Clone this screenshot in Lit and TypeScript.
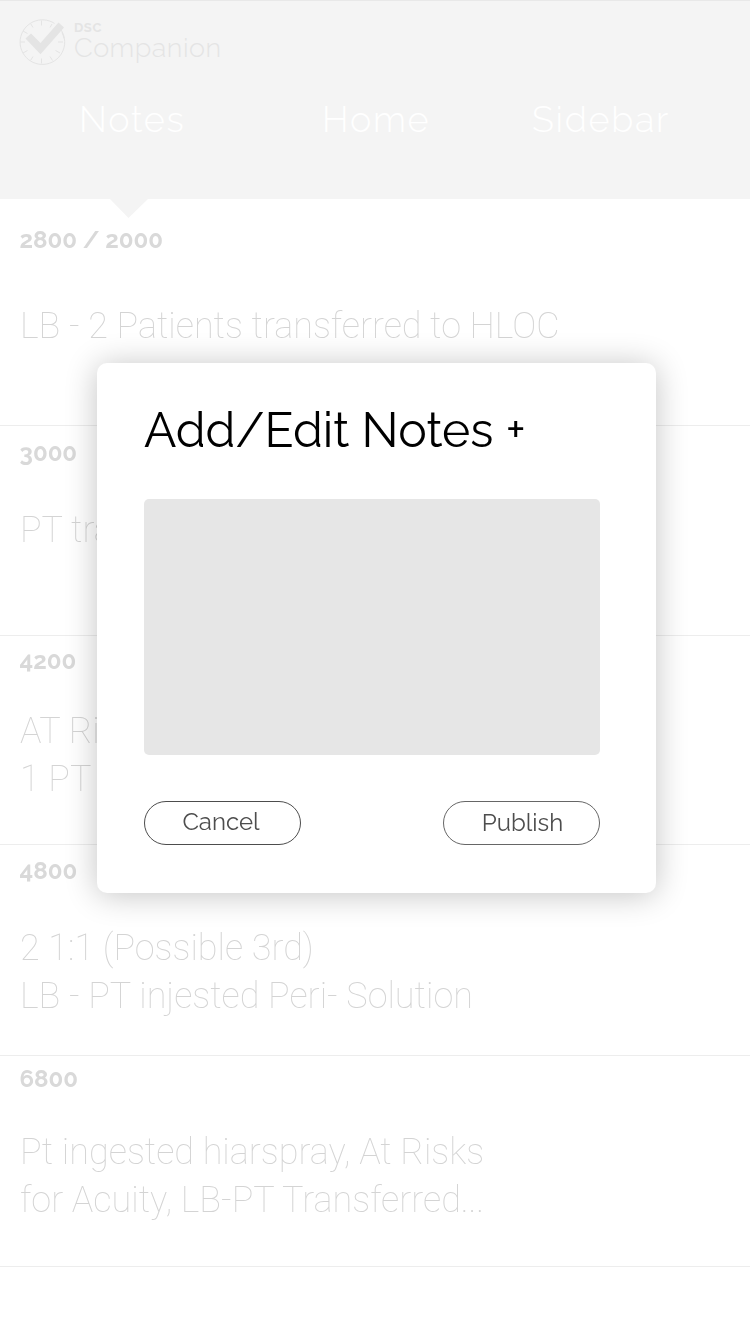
import { LitElement, html, css } from "lit";
import { customElement } from "lit/decorators.js";

interface Note {
  code: string;
  lines: string[];
  cls: string;
}

const notes: Note[] = [
  { code: "2800 / 2000", lines: ["LB - 2 Patients transferred to HLOC"], cls: "n1" },
  { code: "3000", lines: ["PT transferred"], cls: "n2" },
  { code: "4200", lines: ["AT Risk", "1 PT"], cls: "n3" },
  { code: "4800", lines: ["2 1:1 (Possible 3rd)", "LB - PT injested Peri- Solution"], cls: "n4" },
  { code: "6800", lines: ["Pt ingested hiarspray, At Risks", "for Acuity, LB-PT Transferred..."], cls: "n5" },
];

@customElement("app-root")
export class AppRoot extends LitElement {
  static styles = css`
    :host { display: block; position: relative; width: 750px; height: 1335px; overflow: hidden; background: #fff; font-family: Raleway, Lato, sans-serif; }
    * { box-sizing: border-box; }
    header { height: 199px; background: #f4f4f4; border-top: 1px solid #e8e8e8; position: relative; display: flex; flex-direction: column; }
    .brand { display: flex; padding: 15px 0 0 17px; height: 83px; color: #e4e4e4; }
    .logo { width: 50px; height: 50px; flex: none; }
    .names { padding: 5px 0 0 7px; display: flex; flex-direction: column; white-space: nowrap; }
    .dsc { font-size: 13px; line-height: 13px; font-weight: 700; letter-spacing: 0.6px; }
    .comp { font-size: 27px; line-height: 28px; font-weight: 300; letter-spacing: 0.5px; }
    nav { display: flex; color: #fff; font-size: 36px; line-height: 44px; font-weight: 300; letter-spacing: 1.7px; padding-left: 79px; white-space: nowrap; padding-top: 13px; }
    .t1 { width: 243px; }
    .t2 { width: 210px; }
    .arrow { position: absolute; left: 109px; top: 197px; width: 40px; height: 20px; }
    main, .modal, header { opacity: 0.999; }
    .note { border-bottom: 1px solid #ededed; display: flex; flex-direction: column; padding-left: 20px; color: #d9d9d9; white-space: nowrap; }
    .code { font-size: 24px; line-height: 30px; font-weight: 700; margin-left: -0.5px; }
    .body { font-family: Roboto, sans-serif; font-weight: 100; font-size: 36px; line-height: 48px; color: #d4d4d4; }
    .n1 { height: 227px; padding-top: 26px; gap: 47px; }
    .n2 { height: 210px; padding-top: 12px; gap: 38px; }
    .n3 { height: 209px; padding-top: 10px; gap: 31px; }
    .n4 { height: 211px; padding-top: 11px; gap: 38px; }
    .n5 { height: 211px; padding-top: 8px; gap: 34px; }
    .modal { position: absolute; left: 97px; top: 363px; width: 559px; height: 530px; border-radius: 10px; background: #fff; box-shadow: 0 2px 32px rgba(0, 0, 0, 0.24); padding: 37px 56px 0 47px; display: flex; flex-direction: column; }
    h1 { margin: 0; font-size: 48px; line-height: 60px; font-weight: 400; color: #000; white-space: nowrap; height: 99px; }
    .field { height: 256px; border-radius: 5px; background: #e6e6e6; }
    .actions { display: flex; justify-content: space-between; margin-top: 46px; }
    button { width: 157px; height: 44px; border: 1px solid #4d4d4d; border-radius: 22px; background: none; color: #4d4d4d; font: 400 24px/40px Raleway, Lato, sans-serif; padding: 0 3px 2px 0; }
    .publish { padding: 1px 0 1px 2px; border-color: #666; }
  `;

  render() {
    return html`
      <header>
        <div class="brand">
          <svg class="logo" viewBox="0 0 50 50" fill="none" stroke="#e4e4e4">
            <path d="M41.200 10.400A22.300 22.300 0 1 1 37.500 7.400M45 16.500A22.300 22.300 0 0 1 47 22.500"></path>
            <path d="M24.500 4.500v5M24.500 42.500v5M3 26h5M41 26h5M13.500 7.500l2.500 4M6 15l4.500 2.500M6 37l4.500-2.500M13.500 44.500l2.500-4M35.500 44.500l-2.500-4M43 37l-4.500-2.500M35 8l-2 3.500"></path>
            <path d="M8.500 22.500L14 17.500L23.500 27L41.500 6.500L47 11.500L23.500 38.300Z" fill="#e4e4e4" stroke="none"></path>
          </svg>
          <div class="names"><span class="dsc">DSC</span><span class="comp">Companion</span></div>
        </div>
        <nav><span class="t1">Notes</span><span class="t2">Home</span><span>Sidebar</span></nav>
        <svg class="arrow" viewBox="0 0 40 20"><path d="M0 0H40L19.500 20Z" fill="#f4f4f4"></path></svg>
      </header>
      <main>
        ${notes.map((n) => html`<section class="note ${n.cls}">
          <div class="code">${n.code}</div>
          <div>${n.lines.map((l) => html`<div class="body">${l}</div>`)}</div>
        </section>`)}
      </main>
      <div class="modal">
        <h1>Add/Edit Notes +</h1>
        <div class="field"></div>
        <div class="actions"><button>Cancel</button><button class="publish">Publish</button></div>
      </div>
    `;
  }
}
